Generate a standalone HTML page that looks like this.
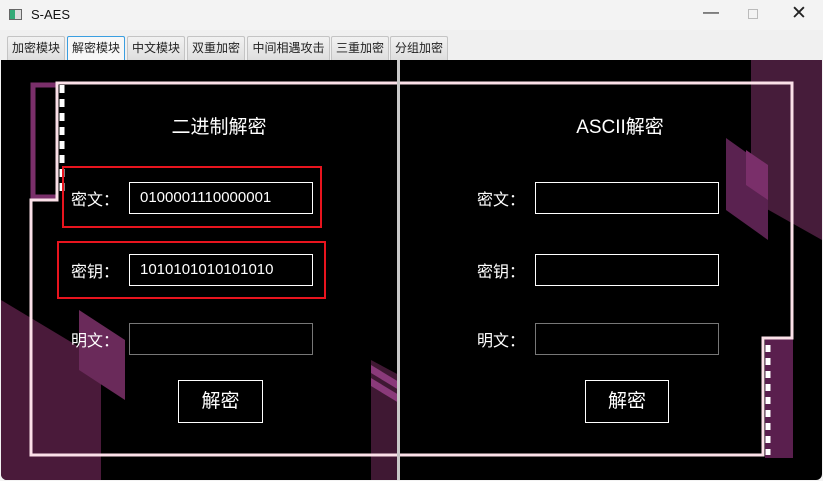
<!DOCTYPE html>
<html><head><meta charset="utf-8"><style>
*{margin:0;padding:0;box-sizing:border-box}
body{width:823px;height:481px;overflow:hidden;background:#f3f3f3;font-family:"Liberation Sans","Noto Sans CJK SC",sans-serif;position:relative}
.abs{position:absolute}
.tab{position:absolute;top:36px;height:24px;border:1px solid #c4c4c4;border-bottom:none;background:linear-gradient(#f2f2f2,#dedede);font-size:12px;color:#222;text-align:center;line-height:22px;border-radius:2px 2px 0 0}
.tab.sel{background:#f7f7f7;border-color:#3a9ee0}
.lbl{position:absolute;color:#fff;font-size:16px}
.inp{position:absolute;height:32px;border:1px solid #fff;color:#fff;font-size:15px;line-height:30px;padding-left:10px}
.btn{position:absolute;width:85px;height:43px;border:1px solid #fff;color:#fff;font-size:19px;text-align:center;line-height:41px}
.h{position:absolute;top:112px;color:#fff;font-size:19px;width:200px;text-align:center}
.red{position:absolute;border:2px solid #e8141e}
</style></head><body>
<div class="abs" style="left:9px;top:9px;width:13px;height:11px;border:1px solid #666;background:linear-gradient(90deg,#3a7 0 5px,#ddd 5px)"></div>
<div class="abs" style="left:31px;top:7px;font-size:13px;color:#111">S-AES</div>
<div class="abs" style="left:703px;top:4px;font-size:16px;color:#222">&#8212;</div>
<div class="abs" style="left:748px;top:9px;width:10px;height:10px;border:1px solid #bbb"></div>
<div class="abs" style="left:791px;top:2px;font-size:19px;color:#222">✕</div>
<div class="abs" style="left:0;top:30px;width:823px;height:30px;background:#f0f0f0"></div>
<div class="tab" style="left:7px;width:58px">加密模块</div>
<div class="tab sel" style="left:67px;width:58px">解密模块</div>
<div class="tab" style="left:127px;width:58px">中文模块</div>
<div class="tab" style="left:187px;width:58px">双重加密</div>
<div class="tab" style="left:247px;width:83px">中间相遇攻击</div>
<div class="tab" style="left:331px;width:58px">三重加密</div>
<div class="tab" style="left:390px;width:58px">分组加密</div>
<div class="abs" style="left:1px;top:60px;width:821px;height:420px;background:#000;overflow:hidden;border-radius:0 0 6px 6px">
<svg width="821" height="421" style="position:absolute;left:0;top:0">
<polygon points="0,240 0,421 100,421 100,300" fill="#4a1a3a"/>
<polyline points="56,25 32,25 32,137 56,137" fill="none" stroke="#7a2f6a" stroke-width="5"/>
<polygon points="78,250 124,280 124,340 78,310" fill="#6a2a5a"/>
<polygon points="370,300 398,315 398,421 370,421" fill="#3f1833"/>
<polygon points="370,305 398,322 398,330 370,313" fill="#8a3a7a"/>
<polygon points="370,318 398,335 398,343 370,326" fill="#8a3a7a"/>
<polygon points="750,0 821,0 821,180 750,140" fill="#461c3a"/>
<polygon points="725,78 767,108 767,180 725,150" fill="#5a2250"/>
<polygon points="745,90 767,105 767,140 745,125" fill="#7a2f6a"/>
<rect x="764" y="278" width="28" height="120" fill="#5a1f4e"/>
<polyline points="56,80 56,23 791,23 791,278 762,278 762,395 30,395 30,140 56,140 56,80" fill="none" stroke="#fbe0e8" stroke-width="3"/>
<polyline points="61,25 61,135" fill="none" stroke="#fff" stroke-width="5" stroke-dasharray="8,6"/>
<polyline points="767,285 767,395" fill="none" stroke="#fff" stroke-width="5" stroke-dasharray="7,6"/>
<rect x="396" y="0" width="3" height="421" fill="#c8c8c8"/>
</svg>
</div>
<div class="h" style="left:119px">二进制解密</div>
<div class="h" style="left:520px">ASCII解密</div>
<div class="red" style="left:62px;top:166px;width:260px;height:62px"></div>
<div class="red" style="left:57px;top:241px;width:269px;height:58px"></div>
<div class="lbl" style="left:71px;top:186px">密文：</div>
<div class="lbl" style="left:71px;top:258px">密钥：</div>
<div class="lbl" style="left:71px;top:327px">明文：</div>
<div class="inp" style="left:129px;top:182px;width:184px">0100001110000001</div>
<div class="inp" style="left:129px;top:254px;width:184px">1010101010101010</div>
<div class="inp" style="left:129px;top:323px;width:184px;border-color:#777"></div>
<div class="btn" style="left:178px;top:380px">解密</div>
<div class="lbl" style="left:477px;top:186px">密文：</div>
<div class="lbl" style="left:477px;top:258px">密钥：</div>
<div class="lbl" style="left:477px;top:327px">明文：</div>
<div class="inp" style="left:535px;top:182px;width:184px"></div>
<div class="inp" style="left:535px;top:254px;width:184px"></div>
<div class="inp" style="left:535px;top:323px;width:184px;border-color:#777"></div>
<div class="btn" style="left:585px;top:380px;width:84px">解密</div>
</body></html>
